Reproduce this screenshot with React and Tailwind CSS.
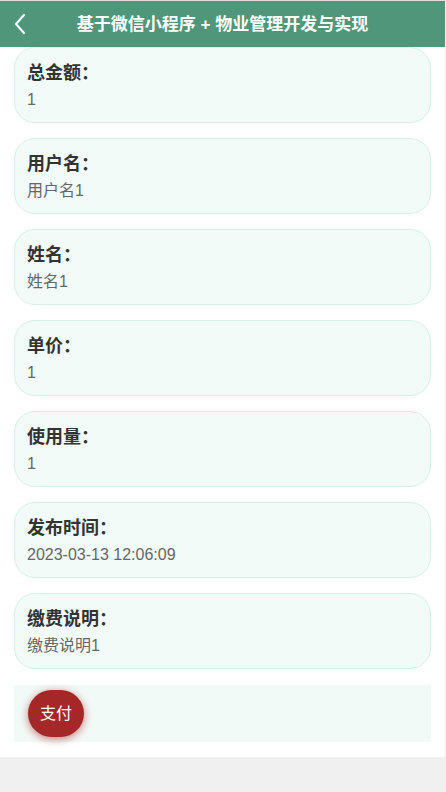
import React from "react";

const fields = [
  { label: "总金额：", value: "1" },
  { label: "用户名：", value: "用户名1" },
  { label: "姓名：", value: "姓名1" },
  { label: "单价：", value: "1" },
  { label: "使用量：", value: "1" },
  { label: "发布时间：", value: "2023-03-13 12:06:09" },
  { label: "缴费说明：", value: "缴费说明1" },
];

const font = {
  fontFamily: '"Liberation Sans", "Noto Sans CJK SC", sans-serif',
};

const App = () => {
  return (
    <div className="min-h-screen bg-[#f0f0f0]" style={font}>
      <div className="w-[445px] bg-white border-t border-[#dcdcdc] pb-[15px]">
        {/* header */}
        <div className="relative h-[46px] bg-[#4f967a] flex items-center justify-center">
          <button className="absolute left-[12px] top-[11px] text-white">
            <svg width="16" height="24" viewBox="0 0 16 24" fill="none">
              <path
                d="M12 3 L4 12 L12 21"
                stroke="white"
                strokeWidth="2"
                strokeLinecap="round"
                strokeLinejoin="round"
              />
            </svg>
          </button>
          <h1 className="text-white text-[17px] font-bold leading-none">
            基于微信小程序 + 物业管理开发与实现
          </h1>
        </div>

        {/* detail cards */}
        <div className="flex flex-col gap-[15px] px-[14px]">
          {fields.map((f) => (
            <div
              key={f.label}
              className="rounded-[21px] border border-[#d4f0e7] bg-[#f2fbf8] px-[12px] pt-[13px] pb-[11px]"
            >
              <div className="text-[18px] leading-[24px] font-bold text-[#333333]">
                {f.label}
              </div>
              <div className="mt-[4px] text-[16px] leading-[22px] text-[#666666]">
                {f.value}
              </div>
            </div>
          ))}

          {/* pay */}
          <div className="mt-px bg-[#f2faf7] h-[57px] flex items-center px-[14px]">
            <button className="w-[56px] h-[47px] rounded-full bg-[#a42828] text-white text-[16px] shadow-[0_2px_8px_rgba(165,40,40,0.6)]">
              支付
            </button>
          </div>
        </div>
      </div>
    </div>
  );
};

export default App;
